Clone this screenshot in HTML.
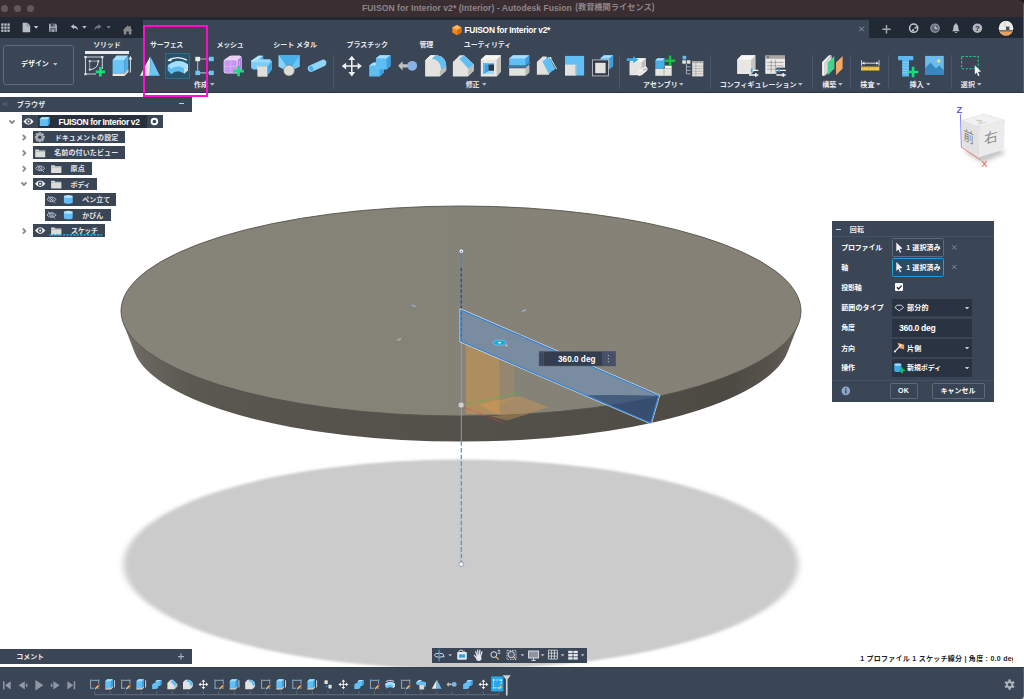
<!DOCTYPE html><html lang="ja"><head><meta charset="utf-8"><title>FUISON for Interior v2</title><style>
*{box-sizing:border-box;margin:0;padding:0}
html,body{width:1024px;height:699px;overflow:hidden;background:#fff}
body{position:relative;font-family:"Liberation Sans","Noto Sans CJK JP",sans-serif;color:#fff;font-size:9px;line-height:1}
.abs{position:absolute}
.t{position:absolute;white-space:pre;font-weight:700}
.sep{position:absolute;top:55px;width:1px;height:34px;background:#4b5668}
.row{position:absolute;height:12px;background:#3a4556}
.fld{position:absolute;background:#2a3341}
</style></head><body>
<svg class="abs" style="left:0;top:92px" width="1024" height="575" viewBox="0 92 1024 575">
<defs>
<filter id="bl" x="-5%" y="-10%" width="110%" height="120%"><feGaussianBlur stdDeviation="3 1.1"/></filter>
<linearGradient id="gtop" x1="0" y1="0" x2="1" y2="0"><stop offset="0" stop-color="#868378"/><stop offset="0.5" stop-color="#858278"/><stop offset="1" stop-color="#858177"/></linearGradient>
<linearGradient id="gside" x1="0" y1="0" x2="1" y2="0"><stop offset="0" stop-color="#75726a"/><stop offset="0.03" stop-color="#696660"/><stop offset="0.1" stop-color="#5b5851"/><stop offset="0.3" stop-color="#56534c"/><stop offset="0.6" stop-color="#534f49"/><stop offset="0.9" stop-color="#4d4a44"/><stop offset="0.96" stop-color="#57534c"/><stop offset="1" stop-color="#68655d"/></linearGradient>
<clipPath id="ctop"><ellipse cx="461" cy="311" rx="340" ry="105"/></clipPath>
</defs>
<!-- ground shadow -->
<ellipse cx="461" cy="564.2" rx="337.5" ry="104.8" fill="#cbcbcb" filter="url(#bl)"/>
<!-- disc -->
<path d="M123.4 323.4 L134.4 352 A328.9 101.6 0 0 0 787.6 352 L798.6 323.4 Z" fill="url(#gside)"/>
<ellipse cx="461" cy="311" rx="340" ry="105" fill="url(#gtop)" stroke="#56534c" stroke-width="0.9"/>
<!-- ghosted body (orange) -->
<g clip-path="url(#ctop)">
<path d="M465.7 343 L499.4 358 L499.4 414 L465.7 414 Z" fill="#e8a040" fill-opacity="0.42"/>
<path d="M499.4 358 L514.4 364.5 L514.4 398 L499.4 405 Z" fill="#e8a040" fill-opacity="0.17"/>
<path d="M478.6 404.4 L518.7 395.8 L548.7 407.3 L507.2 419.4 Z" fill="#e8a040" fill-opacity="0.32"/>
</g>
<path d="M490 416.2 L530 413.5 L507.2 420.4 Z" fill="#a98a55" fill-opacity="0.55"/>
<!-- origin axes -->
<path d="M465 404.4 L520.8 392.2" stroke="#3fc24a" stroke-width="1" stroke-dasharray="9 2 2 2" fill="none" opacity="0.65"/>
<path d="M464.3 407.3 L503.6 423" stroke="#d9424f" stroke-width="1" stroke-dasharray="9 2 2 2" fill="none" opacity="0.6"/>
<!-- revolve axis -->
<path d="M461.3 252 V341" stroke="#3f86dc" stroke-width="1.3" fill="none"/>
<path d="M461.3 268 V310" stroke="#3a4a63" stroke-width="1.3" stroke-dasharray="3.2 2.2" fill="none"/>
<path d="M461.3 341.5 V441" stroke="#8fa6c6" stroke-width="1" fill="none" opacity="0.85"/>
<path d="M461.3 441.5 V562" stroke="#4a90e2" stroke-width="1.2" stroke-dasharray="4.6 2" fill="none"/>
<!-- profile -->
<path d="M460.9 310 L658.6 395.8 L650.7 422.9 L460.9 341.3 Z" fill="#6a9ad8" fill-opacity="0.42"/>
<path d="M612 395 Q640 395 658.6 395.8 L650.7 422.9 L586 395.3 Z" fill="#1c3561" fill-opacity="0.55"/>
<path d="M460.0 308.6 L659.7 395.3 L651.3 424.1 L460.0 341.9 Z" fill="none" stroke="#eef0ee" stroke-width="0.9" stroke-opacity="0.85" stroke-linejoin="round"/>
<path d="M460.9 310 L658.6 395.8 L650.7 422.9 L460.9 341.3 Z" fill="none" stroke="#2f86e6" stroke-width="1.1" stroke-linejoin="round"/>
<path d="M461.3 312 V340" stroke="#3a4a63" stroke-width="1" stroke-dasharray="3.2 2.2" fill="none" opacity="0.6"/>
<!-- sketch points / origin -->
<path d="M474 345 Q505 346.5 528.4 329.3" stroke="#6f8795" stroke-width="0.6" fill="none" opacity="0.8"/>
<ellipse cx="499.6" cy="342.6" rx="6.6" ry="2.7" fill="#1ea7e4" stroke="#7fd0f5" stroke-width="0.6"/>
<ellipse cx="499.6" cy="342.6" rx="1.5" ry="0.9" fill="#fff"/>
<circle cx="506.5" cy="345.6" r="1" fill="#c9d3da"/>
<path d="M412 305.2l3 1.2M397.5 340.2l3-1.2M522.5 311.2l3-1.2" stroke="#9fb3c2" stroke-width="1.4" stroke-linecap="round"/>
<!-- handles -->
<circle cx="461.3" cy="251.3" r="2.3" fill="#fff" stroke="#6c7785" stroke-width="0.8"/>
<circle cx="461.3" cy="251.6" r="0.9" fill="#3f86dc"/>
<circle cx="461.2" cy="405.1" r="3" fill="#d2d2d0" stroke="#8b8984" stroke-width="0.9"/>
<circle cx="461.2" cy="564.2" r="2.3" fill="#fff" stroke="#7d8794" stroke-width="0.8"/>
<!-- view cube -->
<defs><filter id="bl2" x="-30%" y="-30%" width="160%" height="160%"><feGaussianBlur stdDeviation="2.2"/></filter></defs>
<path d="M964 151L982 163L1006 153L988 143Z" fill="#b8b8b8" filter="url(#bl2)" opacity="0.8"/>
<path d="M961.7 120.3L984 114L1004.7 120.3L978.3 127.2Z" fill="#f1f1f1"/>
<path d="M961.7 120.3L978.3 127.2V157.5L962.3 147.8Z" fill="#e2e2e2"/>
<path d="M978.3 127.2L1004.7 120.3L1004.1 149.5L978.3 157.5Z" fill="#ebebeb"/>
<path d="M961.7 120.3L984 114L1004.7 120.3L978.3 127.2ZM978.3 127.2V157.5" fill="none" stroke="#d2d2d2" stroke-width="0.6" stroke-dasharray="1.5 1"/>
<rect x="975.6" y="125.2" width="5" height="5" fill="#dfe3ea" opacity="0.8"/>
<text transform="matrix(0.94 0.42 0 1.28 963.6 139.4)" font-family="'Liberation Sans','Noto Sans CJK JP',sans-serif" font-size="11" fill="#828282">前</text>
<text transform="matrix(1 -0.28 0 1 984.2 144.2)" font-family="'Liberation Sans','Noto Sans CJK JP',sans-serif" font-size="13.5" fill="#8a8a8a">右</text>
<text transform="matrix(1 -0.2 0.9 0.45 978 123.8)" font-family="'Liberation Sans','Noto Sans CJK JP',sans-serif" font-size="9" fill="#a9a9a9">上</text>
<path d="M960.4 114L961.4 147.2" stroke="#6a6af2" stroke-width="0.8"/><path d="M961.4 147.2L981.2 160.4" stroke="#ee6a6a" stroke-width="0.8"/>
<text x="956.6" y="112.6" font-family="'Liberation Sans',sans-serif" font-size="9.4" font-weight="700" fill="#5b5bf0">Z</text>
<text x="981.2" y="166.8" font-family="'Liberation Sans',sans-serif" font-size="9.4" fill="#f05252">X</text>
<!-- dimension box -->
<rect x="538.8" y="351.2" width="77" height="15" fill="#465167"/>
<rect x="544" y="352" width="58" height="13.4" fill="#333d4d"/>
<path d="M540.6 353v11.5M542.4 353v11.5" stroke="#364052" stroke-width="0.9"/>
<circle cx="608.4" cy="355.6" r="0.7" fill="#aab2bf"/><circle cx="608.4" cy="358.7" r="0.7" fill="#aab2bf"/><circle cx="608.4" cy="361.8" r="0.7" fill="#aab2bf"/>
<text x="558" y="362" font-family="'Liberation Sans',sans-serif" font-size="8.6" font-weight="700" fill="#fff" textLength="37.5" lengthAdjust="spacingAndGlyphs">360.0 deg</text>
</svg>

<div class="abs" style="left:0;top:0;width:1024px;height:17.3px;background:#3a2e32"></div>
<div class="abs" style="left:1.0px;top:4.7px;width:7.4px;height:7.4px;border-radius:50%;background:#63585d"></div>
<div class="abs" style="left:13.9px;top:4.7px;width:7.4px;height:7.4px;border-radius:50%;background:#63585d"></div>
<div class="abs" style="left:26.8px;top:4.7px;width:7.4px;height:7.4px;border-radius:50%;background:#63585d"></div>
<div class="abs" style="left:0;top:16.6px;width:1024px;height:0.8px;background:#2b2125"></div>
<div class="t" style="left:362.00px;top:1.98px;font-size:8.6px;line-height:12.04px;letter-spacing:0.029px;color:#8d8589;font-weight:700;">FUISON for Interior v2* (Interior) - Autodesk Fusion</div>
<div class="t" style="left:575.15px;top:2.26px;font-size:8.2px;line-height:11.48px;letter-spacing:0.040px;color:#8d8589;font-weight:700;">(教育機関ライセンス)</div>
<div class="abs" style="left:0;top:17.3px;width:1024px;height:20.4px;background:#212935"></div>
<div class="abs" style="left:143px;top:19.8px;width:726px;height:17.9px;background:#3a4556"></div>
<div class="t" style="left:464.50px;top:24.52px;font-size:8.4px;line-height:11.76px;letter-spacing:-0.243px;color:#fff;font-weight:700;">FUISON for Interior v2*</div>
<svg class="abs" style="left:0;top:17px" width="1024" height="21" viewBox="0 17 1024 21">
<!-- app grid -->
<g fill="#b9bdc5"><rect x="1.2" y="23.4" width="2.3" height="2.3"/><rect x="4.3" y="23.4" width="2.3" height="2.3"/><rect x="7.4" y="23.4" width="2.3" height="2.3"/>
<rect x="1.2" y="26.5" width="2.3" height="2.3"/><rect x="4.3" y="26.5" width="2.3" height="2.3"/><rect x="7.4" y="26.5" width="2.3" height="2.3"/>
<rect x="1.2" y="29.6" width="2.3" height="2.3"/><rect x="4.3" y="29.6" width="2.3" height="2.3"/><rect x="7.4" y="29.6" width="2.3" height="2.3"/></g>
<!-- file -->
<path d="M22.6 22.8H27.4L30.2 25.6V32.2H22.6Z" fill="#b9bdc5"/><path d="M27.2 22.8V25.8H30.2" fill="none" stroke="#6d7480" stroke-width="0.7"/>
<path d="M33.9 26H38.3L36.1 28.8Z" fill="#c6cad1"/>
<!-- save -->
<path d="M49 23.7H55.6L57 25.1V31.8H49Z" fill="#9fa6b2"/><rect x="50.8" y="23.7" width="4.2" height="2.7" fill="#3b4352"/><rect x="53.4" y="24.1" width="1" height="1.9" fill="#9fa6b2"/><rect x="50.6" y="28.3" width="4.8" height="3.5" fill="#3b4352"/><rect x="51.6" y="29.2" width="2.8" height="2.6" fill="#9fa6b2"/>
<!-- undo -->
<path d="M70.7 26.6L74 24.2V25.8Q77.6 25.9 78 30.2Q76.6 27.8 74 27.7V29.2Z" fill="#b9bdc5"/>
<path d="M82.2 26H86.6L84.4 28.8Z" fill="#b9bdc5"/>
<!-- redo (dim) -->
<path d="M101.5 26.6L98.2 24.2V25.8Q94.6 25.9 94.2 30.2Q95.6 27.8 98.2 27.7V29.2Z" fill="#6f7885"/>
<path d="M106.4 26H110.8L108.6 28.8Z" fill="#6f7885"/>
<!-- home -->
<path d="M122.6 30.4L127.6 25.6L129.4 27.3V26H130.8V28.6L132.6 30.4H131.4V34.6H128.8V31.6H126.4V34.6H123.8V30.4Z" fill="#8a8b88"/>
<!-- document cube -->
<path d="M452.3 27.6L456.9 25L461.5 27.6V32.6L456.9 35.2L452.3 32.6Z" fill="#f08a1e"/><path d="M452.3 27.6L456.9 25L461.5 27.6L456.9 30.2Z" fill="#ffb35a"/><path d="M456.9 30.2L461.5 27.6V32.6L456.9 35.2Z" fill="#d96f0c"/>
<!-- close tab -->
<path d="M859.3 26.6L863.9 31.2M863.9 26.6L859.3 31.2" stroke="#9aa3b0" stroke-width="0.9"/>
<!-- new tab -->
<path d="M886.5 25V33.4M882.3 29.2H890.7" stroke="#a2a6ad" stroke-width="1.5"/>
<!-- extensions -->
<circle cx="913.7" cy="28.2" r="4.1" fill="#212935" stroke="#c3c7ce" stroke-width="1.5"/><path d="M913.9 28.4L916.6 25.4L916.9 28.6ZM913.4 28.6L911 30.9L914.4 31.4Z" fill="#c3c7ce"/>
<!-- job status -->
<circle cx="935" cy="28.2" r="4.8" fill="#8d939e"/><circle cx="935" cy="28.2" r="3.4" fill="#5d6470"/><path d="M935 25.6V28.4H937.4" stroke="#d4d7dc" stroke-width="1" fill="none"/>
<!-- bell -->
<path d="M952.1 31.2Q953.5 30 953.5 27.6Q953.6 24.3 955.9 24.1Q958.2 24.3 958.3 27.6Q958.3 30 959.7 31.2Z" fill="#b9bdc6"/><path d="M955.9 23.2V24.6" stroke="#b9bdc6" stroke-width="1.1"/><path d="M954.7 32H957.1Q957 33.1 955.9 33.1Q954.8 33.1 954.7 32Z" fill="#b9bdc6"/>
<!-- help -->
<circle cx="977.4" cy="28.2" r="4.8" fill="#b0b5be"/>
<text x="977.4" y="30.9" font-family="'Liberation Sans',sans-serif" font-size="7.6" font-weight="700" fill="#212935" text-anchor="middle">?</text>
<!-- avatar -->
<clipPath id="av"><circle cx="1006" cy="28.2" r="7.4"/></clipPath>
<circle cx="1006" cy="28.2" r="8.2" fill="#10151d"/>
<g clip-path="url(#av)"><rect x="997" y="20" width="18" height="17" fill="#ecebe6"/><rect x="997" y="31.4" width="18" height="6" fill="#eaa05a"/><rect x="1006" y="26.6" width="3.4" height="3.4" fill="#4a4f50"/><rect x="997" y="30.2" width="18" height="1.3" fill="#5a5048"/><path d="M1005 21V27" stroke="#b9b9b4" stroke-width="0.6"/></g>
</svg>

<div class="abs" style="left:0;top:37.5px;width:1024px;height:55px;background:#3a4556"></div>
<div class="abs" style="left:0;top:91.6px;width:1024px;height:1px;background:#2c3647"></div>
<div class="abs" style="left:3px;top:45.3px;width:71px;height:39.5px;border:1.2px solid #5d697c;border-radius:3px"></div>
<div class="t" style="left:20.95px;top:59.00px;font-size:7.0px;line-height:9.8px;letter-spacing:-0.029px;color:#fff;font-weight:700;">デザイン</div>
<svg class="abs" style="left:52.70px;top:63.10px" width="4.6" height="2.8" viewBox="0 0 4.6 2.8"><path d="M0 0H4.6L2.3 2.8Z" fill="#b4bbc6"/></svg>
<div class="t" style="left:93.15px;top:40.00px;font-size:7.0px;line-height:9.8px;letter-spacing:-0.171px;color:#e8eaee;font-weight:700;">ソリッド</div>
<div class="t" style="left:149.95px;top:40.00px;font-size:7.0px;line-height:9.8px;letter-spacing:-0.287px;color:#e8eaee;font-weight:700;">サーフェス</div>
<div class="t" style="left:216.55px;top:40.00px;font-size:7.0px;line-height:9.8px;letter-spacing:-0.229px;color:#e8eaee;font-weight:700;">メッシュ</div>
<div class="t" style="left:273.25px;top:40.00px;font-size:7.0px;line-height:9.8px;letter-spacing:-0.031px;color:#e8eaee;font-weight:700;">シート メタル</div>
<div class="t" style="left:346.50px;top:40.00px;font-size:7.0px;line-height:9.8px;letter-spacing:-0.068px;color:#e8eaee;font-weight:700;">プラスチック</div>
<div class="t" style="left:419.50px;top:40.00px;font-size:7.0px;line-height:9.8px;letter-spacing:-0.167px;color:#e8eaee;font-weight:700;">管理</div>
<div class="t" style="left:463.75px;top:40.00px;font-size:7.0px;line-height:9.8px;letter-spacing:-0.103px;color:#e8eaee;font-weight:700;">ユーティリティ</div>
<div class="abs" style="left:85px;top:51.4px;width:43.5px;height:2.2px;background:#e8eaee"></div>
<div class="sep" style="left:333px"></div>
<div class="sep" style="left:619px"></div>
<div class="sep" style="left:710px"></div>
<div class="sep" style="left:812px"></div>
<div class="sep" style="left:850px"></div>
<div class="sep" style="left:888px"></div>
<div class="sep" style="left:951px"></div>
<div class="t" style="left:194.05px;top:79.90px;font-size:7.0px;line-height:9.8px;letter-spacing:0.000px;color:#e8eaee;font-weight:700;">作成</div>
<svg class="abs" style="left:210.10px;top:83.40px" width="4.6" height="2.8" viewBox="0 0 4.6 2.8"><path d="M0 0H4.6L2.3 2.8Z" fill="#b4bbc6"/></svg>
<div class="t" style="left:465.75px;top:79.90px;font-size:7.0px;line-height:9.8px;letter-spacing:-0.167px;color:#e8eaee;font-weight:700;">修正</div>
<svg class="abs" style="left:481.70px;top:83.40px" width="4.6" height="2.8" viewBox="0 0 4.6 2.8"><path d="M0 0H4.6L2.3 2.8Z" fill="#b4bbc6"/></svg>
<div class="t" style="left:643.00px;top:79.90px;font-size:7.0px;line-height:9.8px;letter-spacing:0.021px;color:#e8eaee;font-weight:700;">アセンブリ</div>
<svg class="abs" style="left:678.95px;top:83.40px" width="4.6" height="2.8" viewBox="0 0 4.6 2.8"><path d="M0 0H4.6L2.3 2.8Z" fill="#b4bbc6"/></svg>
<div class="t" style="left:719.75px;top:79.90px;font-size:7.0px;line-height:9.8px;letter-spacing:0.036px;color:#e8eaee;font-weight:700;">コンフィギュレーション</div>
<svg class="abs" style="left:798.20px;top:83.40px" width="4.6" height="2.8" viewBox="0 0 4.6 2.8"><path d="M0 0H4.6L2.3 2.8Z" fill="#b4bbc6"/></svg>
<div class="t" style="left:822.25px;top:79.90px;font-size:7.0px;line-height:9.8px;letter-spacing:0.000px;color:#e8eaee;font-weight:700;">構築</div>
<svg class="abs" style="left:838.20px;top:83.40px" width="4.6" height="2.8" viewBox="0 0 4.6 2.8"><path d="M0 0H4.6L2.3 2.8Z" fill="#b4bbc6"/></svg>
<div class="t" style="left:860.25px;top:79.90px;font-size:7.0px;line-height:9.8px;letter-spacing:0.167px;color:#e8eaee;font-weight:700;">検査</div>
<svg class="abs" style="left:876.45px;top:83.40px" width="4.6" height="2.8" viewBox="0 0 4.6 2.8"><path d="M0 0H4.6L2.3 2.8Z" fill="#b4bbc6"/></svg>
<div class="t" style="left:909.50px;top:79.90px;font-size:7.0px;line-height:9.8px;letter-spacing:0.167px;color:#e8eaee;font-weight:700;">挿入</div>
<svg class="abs" style="left:925.70px;top:83.40px" width="4.6" height="2.8" viewBox="0 0 4.6 2.8"><path d="M0 0H4.6L2.3 2.8Z" fill="#b4bbc6"/></svg>
<div class="t" style="left:960.75px;top:79.90px;font-size:7.0px;line-height:9.8px;letter-spacing:0.167px;color:#e8eaee;font-weight:700;">選択</div>
<svg class="abs" style="left:976.95px;top:83.40px" width="4.6" height="2.8" viewBox="0 0 4.6 2.8"><path d="M0 0H4.6L2.3 2.8Z" fill="#b4bbc6"/></svg>
<div class="abs" style="left:165.3px;top:53.1px;width:25.2px;height:25.6px;background:#27526c;border:1px solid #2f6a89"></div>
<svg class="abs" style="left:0;top:37px" width="1024" height="56" viewBox="0 37 1024 56">
<!-- create sketch -->
<g fill="none" stroke="#c9ced6" stroke-width="1.1"><path d="M85.5 57V74H96M85.5 57H102.3V69"/></g>
<g fill="#e6e8ec"><rect x="84.4" y="56" width="2.2" height="2.2"/><rect x="101.2" y="56" width="2.2" height="2.2"/><rect x="84.4" y="73" width="2.2" height="2.2"/>
<rect x="88.8" y="60.2" width="1.9" height="1.9"/><rect x="97.3" y="60.2" width="1.9" height="1.9"/><rect x="88.8" y="68.7" width="1.9" height="1.9"/></g>
<path d="M89.7 62V69.6M91 61.1H97" stroke="#aab0ba" stroke-width="0.9" fill="none"/>
<path d="M98.2 62Q97.6 69 89.9 69.6" stroke="#dfe2e7" stroke-width="1" fill="none"/>
<path d="M100.4 67.1v9.4M95.7 71.8h9.4" stroke="#12e07a" stroke-width="2.7"/>
<!-- extrude -->
<path d="M112.6 60L116.6 55.6H128.3L124.5 60Z" fill="#a6e0ff"/>
<path d="M124.5 60L128.3 55.6V69.4L124.5 73.4Z" fill="#4fb2ec"/>
<rect x="112.6" y="60" width="11.9" height="13.4" fill="#6cc5f7"/>
<path d="M112.6 73.4H124.5L128.3 69.4V72L124.5 76H112.6Z" fill="#ebe7e1"/>
<path d="M124.5 73.4L128.3 69.4V72L124.5 76Z" fill="#cfcbc5"/>
<path d="M130.4 58.5V72.6" stroke="#f0f0f0" stroke-width="0.9"/><path d="M130.4 55.8l1.7 3.6h-3.4z" fill="#f0f0f0"/>
<!-- surface (triangle) -->
<path d="M150.2 56.4L149.7 75.8H139.9Z" fill="#e9e8e5"/><path d="M147 62.5L146.6 75.8H144.6Z" fill="#cfcdc8"/>
<path d="M150.3 56.4L159.9 75.8H150Z" fill="#6cc5f7"/>
<!-- revolve (selected) -->
<path d="M168 60.6Q177.5 54.8 187 60.2" stroke="#f4f4f4" stroke-width="1.4" fill="none"/><path d="M167.6 60.9l3.4-3.1l0.6 3.4z" fill="#f4f4f4"/>
<path d="M167.7 65.5Q177.8 57 187.9 64.2V66.5L184.4 73.8Q177.5 68.6 171.3 74.2L167.7 70.6Z" fill="#5fbdf3"/>
<path d="M167.7 65.5Q177.8 57 187.9 64.2L184.4 68.4Q177.6 63.8 171.3 69Z" fill="#a5dfff"/>
<path d="M184.4 68.4L187.9 64.2V70.2L184.4 73.8Z" fill="#efece6"/><path d="M185.6 67.6L186.8 66.2V71.1L185.6 72.4Z" fill="#c9c6c0"/>
<!-- pattern -->
<path d="M197.7 59V73M197.7 59H211.3M197.7 72.9H211.3" stroke="#aeb4be" stroke-width="1.1" fill="none"/>
<rect x="195.3" y="56.8" width="4.8" height="4.4" fill="#edebe8"/>
<rect x="209" y="56.8" width="4.8" height="4.4" fill="#6cc5f7"/><rect x="195.3" y="70.7" width="4.8" height="4.4" fill="#6cc5f7"/><rect x="209" y="70.7" width="4.8" height="4.4" fill="#6cc5f7"/>
<!-- mesh (purple) -->
<path d="M223.6 61.5Q223.6 59.8 225.2 58.9L229.5 56Q230.6 55.4 232 55.4H239Q241.7 55.4 241.7 58V68.5Q241.7 69.7 240.8 70.5L238 73Q237.2 73.6 236 73.6H226Q223.6 73.6 223.6 71.2Z" fill="#ecd5fc"/>
<rect x="224.4" y="60.2" width="12.4" height="12.6" rx="1.6" fill="#c898f0"/>
<path d="M237.7 60L241 57.2V68.4L237.7 71.6Z" fill="#b07ce0"/>
<path d="M226.2 59.2L230.2 56.2H240L236.8 59.2Z" fill="#ead2fb"/>
<path d="M230.6 60.2V72.8M224.4 66.5H236.8M233.2 56.2L231.4 59.2M239.4 60.6V69.6" stroke="#dcbaf8" stroke-width="0.7" fill="none"/>
<path d="M238.6 65.9v10.4M233.4 71.1h10.4" stroke="#12e07a" stroke-width="2.7"/>
<!-- sheet metal -->
<path d="M251.1 60.8L258.4 55.8H263.1V59.6H270.4L271.9 61.4V69.6L268.1 74.3V66.1H258.4V69.6H253.1L251.1 67.8Z" fill="#7ccdf9"/>
<path d="M251.1 60.8L258.4 55.8H263.1L259 59.6L252.6 62.3Z" fill="#b5e4ff"/>
<path d="M259 59.6L263.1 55.8V59.6Z" fill="#4fb2ec"/>
<path d="M268.1 65.8L271.9 61.4V69.6L268.1 74.6Z" fill="#3fa4e6"/>
<path d="M252.6 62.3L259 59.6H270.4L268.1 62.3Z" fill="#9bdafc"/>
<rect x="257.8" y="66.4" width="9.4" height="9.9" fill="#e0ded9" stroke="#f1f0ed" stroke-width="0.5"/>
<!-- funnel -->
<path d="M278.7 55.3H299.8V66.5L294.5 69.3H283.5L278.7 66.5Z" fill="#6cc5f7"/>
<path d="M278.7 55.3L285.8 65.5H292.6L299.8 55.3Z" fill="#4aaee9"/><path d="M278.7 55.3L285.8 65.5L283.5 69.3L278.7 66.5Z" fill="#8bd3fb"/>
<circle cx="289" cy="70.5" r="5.4" fill="#dedcd7" stroke="#6f6d69" stroke-width="0.6"/>
<!-- pipe -->
<path d="M309.6 65.5L322.8 59.6A3 3.6 0 0 1 325.6 65.6L312.6 71.6A3.4 3.4 0 0 1 309.6 65.5Z" fill="#8fd4fb"/>
<ellipse cx="311.2" cy="68.5" rx="2.1" ry="2.6" transform="rotate(-24 311.2 68.5)" fill="#4aaee9"/>
<!-- move -->
<g fill="#f2f2f2"><path d="M351.8 55.8l3.4 4.3h-6.8z"/><path d="M351.8 76.4l3.4-4.3h-6.8z"/><path d="M341.8 66.1l4.3-3.4v6.8z"/><path d="M361.9 66.1l-4.3-3.4v6.8z"/></g>
<path d="M351.8 59.5V72.8M345.5 66.1H358.2" stroke="#f2f2f2" stroke-width="1.5"/>
<!-- combine -->
<path d="M375.9 58.2L379.8 55.3H390.5V66L386.6 69.6H384V72.6L379.6 76.4H369.2V65.5L373.3 62.4H375.9Z" fill="#5fbdf3"/>
<path d="M375.9 58.2L379.8 55.3H390.5L386.6 58.4Z" fill="#a5dfff"/><path d="M369.2 65.5L373.3 62.4H375.9V65.5Z" fill="#a5dfff"/>
<path d="M386.6 58.4L390.5 55.3V66L386.6 69.6Z" fill="#3d9fe0"/><path d="M379.6 69.6H384V72.6L379.6 76.4Z" fill="#3d9fe0"/>
<!-- align -->
<path d="M398.1 65.8L402.6 61.2V64.2H408.5V67.4H402.6V70.4Z" fill="#bfc0c0"/>
<circle cx="412.2" cy="65.8" r="4.9" fill="#86b3e3"/>
<!-- fillet -->
<path d="M425.1 60.5L430.5 55.3H437Q446.2 57 446.2 66.5V70.5L439.8 76.4H425.1Z" fill="#e4e2de"/>
<path d="M431.5 58.6L435.5 55.3Q446.2 56 446.2 67L441.2 70Q441 60 431.5 58.6Z" fill="#62bff5"/>
<path d="M441.2 70L446.2 66.5V70.5L439.8 76.4V71Z" fill="#bdbab5"/><path d="M425.1 60.5L430.5 55.3H435.5L431.5 58.6Z" fill="#f4f3f0"/>
<!-- chamfer -->
<path d="M452.9 62L459.8 55.3H464L474 64.6V70.5L467.8 76.4H452.9Z" fill="#e4e2de"/>
<path d="M459.4 58.7L463.8 55.3L474 64.6L468.6 69Z" fill="#62bff5"/><path d="M468.6 69L474 64.6V70.5L467.8 76.4Z" fill="#bdbab5"/>
<!-- shell -->
<path d="M480.8 59.6L485.6 55.3H501V71.6L496.6 76.4H480.8Z" fill="#e9e7e3"/>
<path d="M496.6 59.6L501 55.3V71.6L496.6 76.4Z" fill="#c4c1bc"/><path d="M480.8 59.6L485.6 55.3H501L496.6 59.6Z" fill="#f6f5f3"/>
<rect x="483.2" y="63" width="10.8" height="11" fill="#2f3a49"/>
<path d="M483.2 63H488.6V70.8L483.2 74Z" fill="#3f9fe0"/><path d="M483.2 74L488.6 70.8H494V74Z" fill="#9ad9fd"/><path d="M483.2 63H494V64.6H484.8V74H483.2Z" fill="#62bff5"/>
<!-- split body -->
<path d="M509.2 58.5L513 55.3H529.2V62.2L525.4 65.4H509.2Z" fill="#62bff5"/><path d="M509.2 58.5L513 55.3H529.2L525.4 58.5Z" fill="#a5dfff"/><path d="M525.4 58.5L529.2 55.3V62.2L525.4 65.4Z" fill="#3d9fe0"/>
<path d="M508 66.9H525.6L530.4 62.6" stroke="#3aa3e6" stroke-width="1" fill="none"/>
<path d="M509.2 68.3H525.4L529.2 65V72.4L525.4 75.8H509.2Z" fill="#e4e2de"/><path d="M525.4 68.3L529.2 65V72.4L525.4 75.8Z" fill="#bdbab5"/>
<!-- draft -->
<path d="M536.9 62L542.6 56.6H546.4L551 71.6L548 75H536.9Z" fill="#e4e2de"/><path d="M536.9 73.8H549V75H536.9Z" fill="#bdbab5"/>
<path d="M542.4 61.4L548.8 56.6L555.4 69L548.6 73.6Z" fill="#62bff5"/>
<path d="M550.6 58.4L556.6 69" stroke="#f2f2f2" stroke-width="0.9"/><circle cx="550.4" cy="58" r="1.1" fill="#f2f2f2"/>
<!-- scale -->
<rect x="565" y="55.9" width="19.1" height="19.6" fill="#62bff5"/><rect x="565" y="64.6" width="11.2" height="10.9" fill="#e4e2de"/><path d="M575.2 64.6h1v10.9h-1z" fill="#bdbab5"/>
<!-- offset face -->
<path d="M600.4 58.2L604 55.3H613.1V66L609.4 69.2H600.4Z" fill="#62bff5"/><path d="M600.4 58.2L604 55.3H613.1L609.4 58.2Z" fill="#a5dfff"/><path d="M609.4 58.2L613.1 55.3V66L609.4 69.2Z" fill="#3d9fe0"/>
<rect x="592.5" y="59.9" width="16" height="16" fill="#303a49" stroke="#b9bcc2" stroke-width="0.9"/>
<rect x="595.2" y="62.8" width="10.4" height="10.4" fill="#e4e2de"/>
<!-- insert derive -->
<path d="M629.5 62L633.8 58.2H645.9V71.4L641.6 75.2H629.5Z" fill="#e6e4e0"/><path d="M641.6 62L645.9 58.2V71.4L641.6 75.2Z" fill="#c4c1bc"/><path d="M629.5 62L633.8 58.2H645.9L641.6 62Z" fill="#f6f5f3"/>
<path d="M626.8 58.3H633.2V56.2L638.4 59.7L633.2 63.2V61.1H626.8Z" fill="#37aee9"/>
<g fill="none" stroke="#f4f4f4" stroke-width="1.3"><rect x="637.6" y="71" width="5.6" height="3.4" rx="1.7" transform="rotate(-35 640.4 72.7)"/><rect x="641.6" y="68" width="5.6" height="3.4" rx="1.7" transform="rotate(-35 644.4 69.7)"/></g>
<!-- new component -->
<path d="M655.3 68.6H671.7V75.8H655.3Z" fill="#e6e4e0"/><path d="M664.8 65.6H671.7V68.6H664.8Z" fill="#f4f3f0"/><path d="M663.4 68.6h1.2v7.2h-1.2z" fill="#bdbab5"/>
<path d="M655.3 60.6L657.4 58.2H664.6V66.2L662.6 68.7H655.3Z" fill="#49aee8"/><path d="M655.3 60.6L657.4 58.2H664.6L662.6 60.6Z" fill="#a5dfff"/>
<path d="M670.1 55.6v10.4M664.9 60.8h10.4" stroke="#16c23f" stroke-width="2.4"/>
<!-- BOM table -->
<rect x="682.6" y="55.8" width="3.6" height="3.6" fill="#62bff5"/><rect x="682.3" y="60.3" width="3.6" height="3.4" fill="#e6e4e0"/><rect x="686.8" y="60.3" width="3.6" height="3.4" fill="#e6e4e0"/>
<path d="M686.4 64V74M686.4 66.8H690.6M686.4 70.4H690.6M686.4 73.8H690.6" stroke="#aeb4be" stroke-width="0.9" fill="none"/>
<rect x="692.2" y="61.1" width="11.1" height="15.3" fill="#e6e4e0"/><rect x="692.2" y="61.1" width="11.1" height="2" fill="#a9a7a3"/>
<path d="M692.2 66H703.3M692.2 68.6H703.3M692.2 71.2H703.3M692.2 73.8H703.3M695.8 63V76.4" stroke="#9c9a96" stroke-width="0.6"/>
<!-- configure cube -->
<path d="M737.1 59.8L741.4 55.3H755.3V69.5L751 74H737.1Z" fill="#e9e7e4"/><path d="M751 59.8L755.3 55.3V69.5L751 74Z" fill="#c9c6c1"/><path d="M737.1 59.8L741.4 55.3H755.3L751 59.8Z" fill="#f8f7f5"/>
<path d="M749 70.4H758.4M749 75H758.4" stroke="#f2f2f2" stroke-width="1.3"/><rect x="750.8" y="68.6" width="1.7" height="3.6" fill="#2fa9ea"/><rect x="755" y="73.2" width="1.7" height="3.6" fill="#f2f2f2"/>
<!-- configure table -->
<rect x="765.3" y="55.6" width="19.7" height="18.2" fill="#eceae7"/><rect x="765.3" y="55.6" width="19.7" height="3.2" fill="#a9a7a3"/><rect x="766.6" y="56.6" width="2.6" height="1" fill="#4a4a4a"/>
<path d="M767 62.4H783.4M767 65.8H783.4M767 69.2H783.4M771.2 60V72.6M775.4 60V72.6" stroke="#8f8d89" stroke-width="0.7"/>
<rect x="776.4" y="67.6" width="9" height="9" fill="#3a4556"/>
<path d="M776.4 70.4H785.8M776.4 75H785.8" stroke="#f2f2f2" stroke-width="1.3"/><rect x="778.2" y="68.6" width="1.7" height="3.6" fill="#2fa9ea"/><rect x="782.4" y="73.2" width="1.7" height="3.6" fill="#f2f2f2"/>
<!-- construct -->
<path d="M822.1 62L829 55.3H831.6L824.8 62.4V75.8H822.1Z" fill="#f4f3f1"/><path d="M824.8 62.4L831.6 55.6V69L824.8 75.8Z" fill="#dcdad6"/>
<path d="M827.6 62.6L834.4 56V68.6L827.6 75.4Z" fill="#45d08c"/>
<path d="M836 62.6L842.6 56V68.6L836 75.2Z" fill="#f5a763"/>
<!-- inspect -->
<path d="M861.6 60.2V65.8M879 60.2V65.8M862.6 63.2H878" stroke="#eeeeee" stroke-width="0.9" fill="none"/><path d="M861.9 63.2l2.6-1.5v3z" fill="#eee"/><path d="M878.7 63.2l-2.6-1.5v3z" fill="#eee"/>
<rect x="861.1" y="66.6" width="18.3" height="3.9" fill="#f2c64a"/><path d="M863.5 66.6v1.8M866 66.6v1.4M868.5 66.6v1.8M871 66.6v1.4M873.5 66.6v1.8M876 66.6v1.4" stroke="#a8842a" stroke-width="0.6"/>
<!-- insert bolt -->
<path d="M898 56.6Q898 55.9 899 55.9H912.4Q913.4 55.9 913.4 56.8V59.4Q913.4 60.2 912.4 60.2H909V76.4H902.2V60.2H899Q898 60.2 898 59.4Z" fill="#5db8ef"/>
<path d="M902.2 62.4H909M902.2 65H909M902.2 67.6H909M902.2 70.2H909M902.2 72.8H909" stroke="#8fd4fb" stroke-width="0.8"/>
<path d="M913.1 66.8v10.4M907.9 72h10.4" stroke="#12e07a" stroke-width="2.7"/>
<!-- insert image -->
<rect x="925.1" y="55.9" width="18.7" height="19" fill="#6dbbea"/>
<path d="M925.1 74.9V68L930.6 62.6L936 68.6L939.4 65.6L943.8 70.4V74.9Z" fill="#3788c2"/><circle cx="938.6" cy="61" r="1.7" fill="#f5dc7a"/>
<!-- select -->
<rect x="961.6" y="56.5" width="16.6" height="12.2" fill="none" stroke="#19c98a" stroke-width="1.1" stroke-dasharray="2.4 1.5"/>
<path d="M974.8 65.2L981 71.6L978 71.9L979.6 75.6L978.2 76.3L976.6 72.6L974.8 74.6Z" fill="#f4f4f4"/>
</svg>

<div class="abs" style="left:142.9px;top:24.5px;width:65.1px;height:72.3px;border:2.4px solid #ff0ccc;border-bottom-width:2.8px"></div>
<div class="abs" style="left:0;top:97px;width:192px;height:14.5px;background:#3a4556"></div>
<div class="t" style="left:16.75px;top:99.70px;font-size:7.0px;line-height:9.8px;letter-spacing:0.143px;color:#e8eaee;font-weight:700;">ブラウザ</div>
<div class="abs" style="left:178.5px;top:103px;width:5px;height:1.2px;background:#c8cdd6"></div>
<div class="row" style="left:21.6px;top:115.2px;width:141.9px;height:12.5px"></div>
<div class="abs" style="left:37.8px;top:115.2px;width:109.1px;height:12.5px;background:#28303d"></div>
<div class="t" style="left:58.50px;top:116.85px;font-size:8.5px;line-height:11.9px;letter-spacing:-0.373px;color:#fff;font-weight:700;">FUISON for Interior v2</div>
<div class="row" style="left:33.2px;top:130.8px;width:91.6px;height:12.5px"></div>
<div class="t" style="left:54.75px;top:132.70px;font-size:7.0px;line-height:9.8px;letter-spacing:0.059px;color:#e4e7ec;font-weight:700;">ドキュメントの設定</div>
<div class="row" style="left:33.2px;top:146.4px;width:91.6px;height:12.5px"></div>
<div class="t" style="left:54.25px;top:148.30px;font-size:7.0px;line-height:9.8px;letter-spacing:0.118px;color:#e4e7ec;font-weight:700;">名前の付いたビュー</div>
<div class="row" style="left:33.2px;top:162.0px;width:58.4px;height:12.5px"></div>
<div class="t" style="left:70.50px;top:163.90px;font-size:7.0px;line-height:9.8px;letter-spacing:0.167px;color:#e4e7ec;font-weight:700;">原点</div>
<div class="row" style="left:33.2px;top:177.6px;width:63.6px;height:12.5px"></div>
<div class="t" style="left:70.50px;top:179.50px;font-size:7.0px;line-height:9.8px;letter-spacing:-0.306px;color:#e4e7ec;font-weight:700;">ボディ</div>
<div class="row" style="left:45.2px;top:193.2px;width:71px;height:12.5px"></div>
<div class="t" style="left:82.25px;top:195.10px;font-size:7.0px;line-height:9.8px;letter-spacing:0.000px;color:#e4e7ec;font-weight:700;">ペン立て</div>
<div class="row" style="left:45.2px;top:208.8px;width:65.7px;height:12.5px"></div>
<div class="t" style="left:82.25px;top:210.70px;font-size:7.0px;line-height:9.8px;letter-spacing:0.000px;color:#e4e7ec;font-weight:700;">かびん</div>
<div class="row" style="left:33.2px;top:224.4px;width:71.4px;height:12.5px"></div>
<div class="t" style="left:71.00px;top:226.30px;font-size:7.0px;line-height:9.8px;letter-spacing:-0.357px;color:#e4e7ec;font-weight:700;">スケッチ</div>
<svg class="abs" style="left:0;top:94px" width="200" height="146" viewBox="0 94 200 146">
<!-- collapse panel -->
<path d="M4.6 102.6L3.2 104.2L4.6 105.8M7 102.6L5.6 104.2L7 105.8" stroke="#6f7a8a" stroke-width="0.9" fill="none"/>
<!-- expanders -->
<g fill="none" stroke="#8b8b8b" stroke-width="1.8" stroke-linejoin="round">
<path d="M9.4 120.4L12 123L14.6 120.4"/><path d="M21.3 182.4L23.9 185L26.5 182.4"/>
<path d="M22.8 134.9L25.4 137.5L22.8 140.1"/><path d="M22.8 150.5L25.4 153.1L22.8 155.7"/><path d="M22.8 166.1L25.4 168.7L22.8 171.3"/><path d="M22.8 228.5L25.4 231.1L22.8 233.7"/>
</g>
<!-- eyes (visible) -->
<g><path d="M23.3 121.5Q28.5 114.9 33.7 121.5Q28.5 128.1 23.3 121.5Z" fill="#f0f1f3"/><circle cx="28.5" cy="121.5" r="2.3" fill="#3a4556"/><circle cx="28.5" cy="121.5" r="1.1" fill="#f0f1f3"/></g>
<g><path d="M35.0 183.8Q40.2 177.20000000000002 45.4 183.8Q40.2 190.4 35.0 183.8Z" fill="#f0f1f3"/><circle cx="40.2" cy="183.8" r="2.3" fill="#3a4556"/><circle cx="40.2" cy="183.8" r="1.1" fill="#f0f1f3"/></g>
<g><path d="M35.0 230.6Q40.2 224.0 45.4 230.6Q40.2 237.2 35.0 230.6Z" fill="#f0f1f3"/><circle cx="40.2" cy="230.6" r="2.3" fill="#3a4556"/><circle cx="40.2" cy="230.6" r="1.1" fill="#f0f1f3"/></g>
<!-- eyes (hidden) -->
<g fill="none" stroke="#aab2be" stroke-width="1">
<path d="M35.5 168.3Q40.2 163.4 44.9 168.3Q40.2 173.2 35.5 168.3Z"/><circle cx="40.2" cy="168.3" r="1.7"/><path d="M36.6 165L44 172"/>
<path d="M46.8 199.4Q51.5 194.5 56.2 199.4Q51.5 204.3 46.8 199.4Z"/><circle cx="51.5" cy="199.4" r="1.7"/><path d="M47.9 196.1L55.3 203.1"/>
<path d="M46.8 215Q51.5 210.1 56.2 215Q51.5 219.9 46.8 215Z"/><circle cx="51.5" cy="215" r="1.7"/><path d="M47.9 211.7L55.3 218.7"/>
</g>
<!-- root component cube -->
<path d="M39.8 119.2L41.6 117.2H49.5V123.8L47.8 125.9H39.8Z" fill="#62bff5"/><path d="M39.8 119.2L41.6 117.2H49.5L47.8 119.2Z" fill="#b5e4ff"/><path d="M47.8 119.2L49.5 117.2V123.8L47.8 125.9Z" fill="#3d9fe0"/>
<!-- active radio -->
<circle cx="154.4" cy="121.5" r="2.8" fill="none" stroke="#fff" stroke-width="1.9"/>
<!-- gear -->
<g transform="translate(39.8 137.2)" fill="#a9afb9"><circle r="3.6"/><g><rect x="-1.3" y="-5" width="2.6" height="10"/><rect x="-1.3" y="-5" width="2.6" height="10" transform="rotate(45)"/><rect x="-1.3" y="-5" width="2.6" height="10" transform="rotate(90)"/><rect x="-1.3" y="-5" width="2.6" height="10" transform="rotate(135)"/></g><circle r="1.7" fill="#3a4556"/></g>
<!-- folders -->
<g fill="#dcdcda"><path d="M35.2 149.6H38.6L39.4 150.6H45.2V157.3H35.2Z"/><path d="M51.1 165.2H54.5L55.3 166.2H61.4V172.9H51.1Z"/><path d="M51.1 180.8H54.5L55.3 181.8H61.4V188.5H51.1Z"/><path d="M51.1 227.6H54.5L55.3 228.6H61.4V235.3H51.1Z"/></g>
<g fill="#3a4556" opacity="0.35"><rect x="35.2" y="151.2" width="10" height="0.6"/><rect x="51.1" y="166.8" width="10.3" height="0.6"/><rect x="51.1" y="182.4" width="10.3" height="0.6"/><rect x="51.1" y="229.2" width="10.3" height="0.6"/></g>
<!-- bodies -->
<g><path d="M63.9 196.6V202.2A4.4 1.5 0 0 0 72.7 202.2V196.6Z" fill="#62bff5"/><ellipse cx="68.3" cy="196.6" rx="4.4" ry="1.5" fill="#b5e4ff"/></g>
<g><path d="M63.9 212.2V217.8A4.4 1.5 0 0 0 72.7 217.8V212.2Z" fill="#62bff5"/><ellipse cx="68.3" cy="212.2" rx="4.4" ry="1.5" fill="#b5e4ff"/></g>
<!-- sketch underline -->
<path d="M49.5 234.9H101.8" stroke="#1ea7e4" stroke-width="1.7" stroke-dasharray="2.2 1.2"/>
</svg>

<div class="abs" style="left:832px;top:221.2px;width:161.8px;height:181.1px;background:#3a4556"></div>
<div class="abs" style="left:832px;top:235.5px;width:161.8px;height:1px;background:#465164"></div>
<div class="abs" style="left:836.1px;top:228.6px;width:5px;height:1.3px;background:#c8cdd6"></div>
<div class="t" style="left:849.85px;top:225.30px;font-size:7.0px;line-height:9.8px;letter-spacing:0.200px;color:#e8eaee;font-weight:700;">回転</div>
<div class="t" style="left:841.15px;top:243.40px;font-size:7.0px;line-height:9.8px;letter-spacing:-0.182px;color:#fff;font-weight:700;">プロファイル</div>
<div class="t" style="left:841.15px;top:262.90px;font-size:7.0px;line-height:9.8px;letter-spacing:0.000px;color:#fff;font-weight:700;">軸</div>
<div class="t" style="left:841.15px;top:283.00px;font-size:7.0px;line-height:9.8px;letter-spacing:-0.240px;color:#fff;font-weight:700;">投影軸</div>
<div class="t" style="left:841.15px;top:303.30px;font-size:7.0px;line-height:9.8px;letter-spacing:0.127px;color:#fff;font-weight:700;">範囲のタイプ</div>
<div class="t" style="left:841.15px;top:323.40px;font-size:7.0px;line-height:9.8px;letter-spacing:-0.067px;color:#fff;font-weight:700;">角度</div>
<div class="t" style="left:841.15px;top:343.50px;font-size:7.0px;line-height:9.8px;letter-spacing:-0.067px;color:#fff;font-weight:700;">方向</div>
<div class="t" style="left:841.15px;top:363.30px;font-size:7.0px;line-height:9.8px;letter-spacing:-0.067px;color:#fff;font-weight:700;">操作</div>
<div class="abs" style="left:892px;top:238.4px;width:52.2px;height:18.3px;background:#364152;border:1px solid #5e6a7c;border-radius:1.5px"></div>
<div class="abs" style="left:892px;top:258.2px;width:52.4px;height:18.5px;background:#2b4a63;border:1.4px solid #1f9fd0;border-radius:1.5px"></div>
<div class="t" style="left:906.35px;top:243.20px;font-size:7.0px;line-height:9.8px;letter-spacing:0.083px;color:#fff;font-weight:700;">1 選択済み</div>
<div class="t" style="left:906.35px;top:263.00px;font-size:7.0px;line-height:9.8px;letter-spacing:0.083px;color:#fff;font-weight:700;">1 選択済み</div>
<div class="abs" style="left:895.1px;top:283.1px;width:8.2px;height:8.3px;background:#fff;border-radius:1px"></div>
<div class="fld" style="left:891.9px;top:298.7px;width:80.6px;height:17.8px"></div>
<div class="fld" style="left:891.9px;top:318.9px;width:80.6px;height:17.8px"></div>
<div class="fld" style="left:891.9px;top:338.9px;width:80.6px;height:17.8px"></div>
<div class="fld" style="left:891.9px;top:358.9px;width:80.6px;height:17.8px"></div>
<div class="t" style="left:907.05px;top:303.30px;font-size:7.0px;line-height:9.8px;letter-spacing:0.240px;color:#fff;font-weight:700;">部分的</div>
<div class="t" style="left:899.05px;top:322.28px;font-size:8.6px;line-height:12.04px;letter-spacing:-0.303px;color:#fff;font-weight:700;">360.0 deg</div>
<div class="t" style="left:907.05px;top:343.50px;font-size:7.0px;line-height:9.8px;letter-spacing:0.133px;color:#fff;font-weight:700;">片側</div>
<div class="t" style="left:907.05px;top:363.30px;font-size:7.0px;line-height:9.8px;letter-spacing:-0.092px;color:#fff;font-weight:700;">新規ボディ</div>
<svg class="abs" style="left:965.40px;top:306.50px" width="4.2" height="2.6" viewBox="0 0 4.2 2.6"><path d="M0 0H4.2L2.1 2.6Z" fill="#c8cdd6"/></svg>
<svg class="abs" style="left:965.40px;top:346.70px" width="4.2" height="2.6" viewBox="0 0 4.2 2.6"><path d="M0 0H4.2L2.1 2.6Z" fill="#c8cdd6"/></svg>
<svg class="abs" style="left:965.40px;top:366.50px" width="4.2" height="2.6" viewBox="0 0 4.2 2.6"><path d="M0 0H4.2L2.1 2.6Z" fill="#c8cdd6"/></svg>
<div class="abs" style="left:832px;top:379.8px;width:161.8px;height:1px;background:#465164"></div>
<div class="abs" style="left:889.5px;top:383.3px;width:28px;height:15.4px;background:#394455;border:1px solid #5e6a7c;border-radius:1.5px"></div>
<div class="abs" style="left:931.6px;top:383.3px;width:53px;height:15.4px;background:#394455;border:1px solid #5e6a7c;border-radius:1.5px"></div>
<div class="t" style="left:898.05px;top:386.30px;font-size:7.0px;line-height:9.8px;letter-spacing:0.267px;color:#fff;font-weight:700;">OK</div>
<div class="t" style="left:940.45px;top:386.30px;font-size:7.0px;line-height:9.8px;letter-spacing:0.022px;color:#fff;font-weight:700;">キャンセル</div>
<svg class="abs" style="left:832px;top:222px" width="162" height="181" viewBox="832 222 162 181">
<!-- cursor icons -->
<path d="M896.3 242.4L902.5 248.6L899.7 248.9L901.3 252.2L900 252.9L898.4 249.6L896.3 251.4Z" fill="#f0f0f0"/>
<path d="M896.3 261.9L902.5 268.1L899.7 268.4L901.3 271.7L900 272.4L898.4 269.1L896.3 270.9Z" fill="#f0f0f0"/>
<!-- clear x -->
<path d="M952.2 245.3L956.4 249.5M956.4 245.3L952.2 249.5M952.2 264.8L956.4 269M956.4 264.8L952.2 269" stroke="#8f98a6" stroke-width="0.8"/>
<!-- check -->
<path d="M896.9 287.3L898.6 289L901.6 285.6" stroke="#1d2430" stroke-width="1.3" fill="none"/>
<!-- extent type icon -->
<path d="M894.9 307.4L897.2 305.2H901.3L903.6 307.4L899.2 310.9Z" fill="none" stroke="#e6e8ec" stroke-width="0.9" stroke-linejoin="round"/>
<!-- direction icon -->
<path d="M897.6 342.7L904.2 344.8V349.6L899.6 348.2Z" fill="#f2a05c"/><path d="M894.8 351.6L900.6 345.4" stroke="#f4f4f4" stroke-width="1.1"/><circle cx="894.9" cy="351.5" r="1" fill="#f4f4f4"/><path d="M901.6 344.2l-0.4 2.6l-2.2-2z" fill="#f4f4f4"/>
<!-- new body icon -->
<path d="M894.2 364.6V370.8A3.6 1.3 0 0 0 901.4 370.8V364.6Z" fill="#3fa9ea"/><ellipse cx="897.8" cy="364.6" rx="3.6" ry="1.3" fill="#9ad9fd"/>
<path d="M902 367.6v5.6M899.2 370.4h5.6" stroke="#14c45a" stroke-width="1.7"/>
<!-- info -->
<circle cx="845.8" cy="390.9" r="4.3" fill="#8ea6c8"/><rect x="845.1" y="390.1" width="1.4" height="3.2" fill="#3a4556"/><rect x="845.1" y="388.1" width="1.4" height="1.4" fill="#3a4556"/>
</svg>

<div class="abs" style="left:0;top:648.5px;width:192px;height:15.2px;background:#3a4556"></div>
<div class="t" style="left:16.35px;top:652.10px;font-size:7.0px;line-height:9.8px;letter-spacing:-0.086px;color:#e8eaee;font-weight:700;">コメント</div>
<div class="abs" style="left:0;top:667px;width:1024px;height:32px;background:#3a4556;border-top:1px solid #323c4f"></div>
<div class="abs" style="left:432.2px;top:648.2px;width:154.5px;height:15px;background:#3a4556"></div>
<div class="abs" style="left:859px;top:650px;width:154.2px;height:17px;overflow:hidden">
<div class="t" style="left:1.15px;top:3.80px;font-size:7.0px;line-height:9.8px;letter-spacing:0.263px;color:#1e1e1e;font-weight:700;">1 プロファイル 1 スケッチ線分 | 角度 : 0.0 deg</div>
</div>
<svg class="abs" style="left:0;top:645px" width="1024" height="54" viewBox="0 645 1024 54">
<path d="M181 653.6V659.6M178 656.6H184" stroke="#aab1bd" stroke-width="1.1"/>
<g fill="#8f98a6">
<rect x="3" y="681.2" width="1.5" height="8.2"/><path d="M10.7 681.2V689.4L4.9 685.3Z"/>
<path d="M24.8 681.2V689.4L18.6 685.3Z"/><rect x="25.8" y="683.6" width="1.6" height="3.4"/>
<path d="M35.4 680V690.6L43.4 685.3Z"/>
<path d="M53.4 681.2V689.4L59.6 685.3Z"/><rect x="50.8" y="683.6" width="1.6" height="3.4"/>
<rect x="73.7" y="681.2" width="1.5" height="8.2"/><path d="M67.4 681.2V689.4L73.2 685.3Z"/>
</g>
<path d="M94.6 694.7H498.9" stroke="#5f6a7b" stroke-width="1" fill="none"/>
<path d="M94.6 691.2V694.6M110.1 691.2V694.6M125.7 691.2V694.6M141.2 691.2V694.6M156.8 691.2V694.6M172.3 691.2V694.6M187.9 691.2V694.6M203.4 691.2V694.6M219.0 691.2V694.6M234.6 691.2V694.6M250.1 691.2V694.6M265.6 691.2V694.6M281.2 691.2V694.6M296.8 691.2V694.6M312.3 691.2V694.6M327.9 691.2V694.6M343.4 691.2V694.6M359.0 691.2V694.6M374.5 691.2V694.6M390.0 691.2V694.6M405.6 691.2V694.6M421.1 691.2V694.6M436.7 691.2V694.6M452.2 691.2V694.6M467.8 691.2V694.6M483.4 691.2V694.6M498.9 691.2V694.6" stroke="#5f6a7b" stroke-width="0.9" fill="none"/>
<g transform="translate(94.6 684.4) scale(0.9) translate(-94.6 -684)">
<rect x="90.2" y="679.4" width="9" height="8.8" fill="none" stroke="#b4b8c0" stroke-width="0.9"/>
<g fill="#2fa9ea"><rect x="89.4" y="678.6" width="1.5" height="1.5"/><rect x="98.5" y="678.6" width="1.5" height="1.5"/><rect x="89.4" y="687.5" width="1.5" height="1.5"/></g>
<path d="M94.8 689.6L100.2 684.2" stroke="#3a4556" stroke-width="3.2"/>
<path d="M95.8 688.6L99.0 685.4" stroke="#f2c64a" stroke-width="1.7"/><path d="M98.8 685.6L100.1 684.3" stroke="#e8553f" stroke-width="1.7"/><path d="M94.8 689.6l0.5 -1.6l1.1 1.1z" fill="#f4f4f4"/>
</g>
<g transform="translate(110.1 684.4) scale(0.9) translate(-110.1 -684)">
<path d="M104.7 680.6L106.9 678.4H113.1V686.2L110.9 688.2H104.7Z" fill="#62bff5"/>
<path d="M104.7 680.6L106.9 678.4H113.1L110.9 680.6Z" fill="#a5dfff"/><path d="M110.9 680.6L113.1 678.4V686.2L110.9 688.2Z" fill="#3d9fe0"/>
<path d="M104.7 688.2H110.9L113.1 686.2V687.8L110.9 689.8H104.7Z" fill="#e4e2de"/>
<path d="M114.9 679.4V687.4" stroke="#e8e8e8" stroke-width="1"/>
</g>
<g transform="translate(125.7 684.4) scale(0.9) translate(-125.7 -684)">
<rect x="121.3" y="679.4" width="9" height="8.8" fill="none" stroke="#b4b8c0" stroke-width="0.9"/>
<g fill="#2fa9ea"><rect x="120.5" y="678.6" width="1.5" height="1.5"/><rect x="129.6" y="678.6" width="1.5" height="1.5"/><rect x="120.5" y="687.5" width="1.5" height="1.5"/></g>
<path d="M125.9 689.6L131.3 684.2" stroke="#3a4556" stroke-width="3.2"/>
<path d="M126.9 688.6L130.1 685.4" stroke="#f2c64a" stroke-width="1.7"/><path d="M129.9 685.6L131.2 684.3" stroke="#e8553f" stroke-width="1.7"/><path d="M125.9 689.6l0.5 -1.6l1.1 1.1z" fill="#f4f4f4"/>
</g>
<g transform="translate(141.2 684.4) scale(0.9) translate(-141.2 -684)">
<path d="M135.8 680.6L138.1 678.4H144.2V686.2L142.1 688.2H135.8Z" fill="#62bff5"/>
<path d="M135.8 680.6L138.1 678.4H144.2L142.1 680.6Z" fill="#a5dfff"/><path d="M142.1 680.6L144.2 678.4V686.2L142.1 688.2Z" fill="#3d9fe0"/>
<path d="M135.8 688.2H142.1L144.2 686.2V687.8L142.1 689.8H135.8Z" fill="#e4e2de"/>
<path d="M146.1 679.4V687.4" stroke="#e8e8e8" stroke-width="1"/>
</g>
<g transform="translate(156.8 684.4) scale(0.9) translate(-156.8 -684)">
<path d="M155.2 680.6L157.2 679H162.0V684.2L160.0 685.8H158.4V687.6L156.4 689.2H151.6V684L153.6 682.4H155.2Z" fill="#62bff5"/>
<path d="M155.2 680.6L157.2 679H162.0L160.0 680.6Z" fill="#a5dfff"/><path d="M160.0 680.6L162.0 679V684.2L160.0 685.8Z" fill="#3d9fe0"/>
</g>
<g transform="translate(172.3 684.4) scale(0.82) translate(-172.3 -684)">
<path d="M166.3 682.4L170.3 678.4H172.9L178.3 683.6V686.6L174.9 689.8H166.3Z" fill="#e4e2de"/>
<path d="M169.9 680.4L172.8 678.4L178.3 683.6L175.3 685.8Z" fill="#62bff5"/><path d="M175.3 685.8L178.3 683.6V686.6L174.9 689.8Z" fill="#bdbab5"/>
</g>
<g transform="translate(187.9 684.4) scale(0.82) translate(-187.9 -684)">
<path d="M181.9 681.4L184.9 678.4H188.7Q193.9 679.4 193.9 684.6V686.6L190.5 689.8H181.9Z" fill="#e4e2de"/>
<path d="M185.5 680.2L187.7 678.4Q193.9 678.8 193.9 684.8L191.1 686.4Q190.9 680.8 185.5 680.2Z" fill="#62bff5"/>
</g>
<g transform="translate(203.4 684.4) scale(0.82) translate(-203.4 -684)">
<g fill="#f2f2f2"><path d="M203.4 678l2.3 2.9h-4.6z"/><path d="M203.4 690l2.3-2.9h-4.6z"/><path d="M197.4 684l2.9-2.3v4.6z"/><path d="M209.4 684l-2.9-2.3v4.6z"/></g><path d="M203.4 680.4V687.6M199.8 684H207.0" stroke="#f2f2f2" stroke-width="1.2"/>
</g>
<g transform="translate(219.0 684.4) scale(0.9) translate(-219.0 -684)">
<rect x="214.6" y="679.4" width="9" height="8.8" fill="none" stroke="#b4b8c0" stroke-width="0.9"/>
<g fill="#2fa9ea"><rect x="213.8" y="678.6" width="1.5" height="1.5"/><rect x="222.9" y="678.6" width="1.5" height="1.5"/><rect x="213.8" y="687.5" width="1.5" height="1.5"/></g>
<path d="M219.2 689.6L224.6 684.2" stroke="#3a4556" stroke-width="3.2"/>
<path d="M220.2 688.6L223.4 685.4" stroke="#f2c64a" stroke-width="1.7"/><path d="M223.2 685.6L224.5 684.3" stroke="#e8553f" stroke-width="1.7"/><path d="M219.2 689.6l0.5 -1.6l1.1 1.1z" fill="#f4f4f4"/>
</g>
<g transform="translate(234.6 684.4) scale(0.9) translate(-234.6 -684)">
<path d="M229.2 680.6L231.4 678.4H237.6V686.2L235.4 688.2H229.2Z" fill="#62bff5"/>
<path d="M229.2 680.6L231.4 678.4H237.6L235.4 680.6Z" fill="#a5dfff"/><path d="M235.4 680.6L237.6 678.4V686.2L235.4 688.2Z" fill="#3d9fe0"/>
<path d="M229.2 688.2H235.4L237.6 686.2V687.8L235.4 689.8H229.2Z" fill="#e4e2de"/>
<path d="M239.4 679.4V687.4" stroke="#e8e8e8" stroke-width="1"/>
</g>
<g transform="translate(250.1 684.4) scale(0.82) translate(-250.1 -684)">
<path d="M244.1 681.4L247.1 678.4H250.9Q256.1 679.4 256.1 684.6V686.6L252.7 689.8H244.1Z" fill="#e4e2de"/>
<path d="M247.7 680.2L249.9 678.4Q256.1 678.8 256.1 684.8L253.3 686.4Q253.1 680.8 247.7 680.2Z" fill="#62bff5"/>
</g>
<g transform="translate(265.6 684.4) scale(0.9) translate(-265.6 -684)">
<rect x="261.2" y="679.4" width="9" height="8.8" fill="none" stroke="#b4b8c0" stroke-width="0.9"/>
<g fill="#2fa9ea"><rect x="260.4" y="678.6" width="1.5" height="1.5"/><rect x="269.5" y="678.6" width="1.5" height="1.5"/><rect x="260.4" y="687.5" width="1.5" height="1.5"/></g>
<path d="M265.8 689.6L271.2 684.2" stroke="#3a4556" stroke-width="3.2"/>
<path d="M266.8 688.6L270.0 685.4" stroke="#f2c64a" stroke-width="1.7"/><path d="M269.8 685.6L271.1 684.3" stroke="#e8553f" stroke-width="1.7"/><path d="M265.8 689.6l0.5 -1.6l1.1 1.1z" fill="#f4f4f4"/>
</g>
<g transform="translate(281.2 684.4) scale(0.9) translate(-281.2 -684)">
<path d="M275.8 680.6L278.0 678.4H284.2V686.2L282.0 688.2H275.8Z" fill="#62bff5"/>
<path d="M275.8 680.6L278.0 678.4H284.2L282.0 680.6Z" fill="#a5dfff"/><path d="M282.0 680.6L284.2 678.4V686.2L282.0 688.2Z" fill="#3d9fe0"/>
<path d="M275.8 688.2H282.0L284.2 686.2V687.8L282.0 689.8H275.8Z" fill="#e4e2de"/>
<path d="M286.0 679.4V687.4" stroke="#e8e8e8" stroke-width="1"/>
</g>
<g transform="translate(296.8 684.4) scale(0.9) translate(-296.8 -684)">
<rect x="292.4" y="679.4" width="9" height="8.8" fill="none" stroke="#b4b8c0" stroke-width="0.9"/>
<g fill="#2fa9ea"><rect x="291.6" y="678.6" width="1.5" height="1.5"/><rect x="300.6" y="678.6" width="1.5" height="1.5"/><rect x="291.6" y="687.5" width="1.5" height="1.5"/></g>
<path d="M296.9 689.6L302.4 684.2" stroke="#3a4556" stroke-width="3.2"/>
<path d="M297.9 688.6L301.1 685.4" stroke="#f2c64a" stroke-width="1.7"/><path d="M300.9 685.6L302.2 684.3" stroke="#e8553f" stroke-width="1.7"/><path d="M296.9 689.6l0.5 -1.6l1.1 1.1z" fill="#f4f4f4"/>
</g>
<g transform="translate(312.3 684.4) scale(0.9) translate(-312.3 -684)">
<path d="M306.9 680.6L309.1 678.4H315.3V686.2L313.1 688.2H306.9Z" fill="#62bff5"/>
<path d="M306.9 680.6L309.1 678.4H315.3L313.1 680.6Z" fill="#a5dfff"/><path d="M313.1 680.6L315.3 678.4V686.2L313.1 688.2Z" fill="#3d9fe0"/>
<path d="M306.9 688.2H313.1L315.3 686.2V687.8L313.1 689.8H306.9Z" fill="#e4e2de"/>
<path d="M317.1 679.4V687.4" stroke="#e8e8e8" stroke-width="1"/>
</g>
<g transform="translate(327.9 684.4) scale(0.82) translate(-327.9 -684)">
<rect x="323.7" y="679" width="4" height="4.6" rx="0.8" fill="#e4e2de"/><rect x="328.5" y="684.4" width="4" height="4.6" rx="0.8" fill="#e4e2de"/><rect x="325.5" y="685.6" width="1.6" height="1.6" fill="#2fa9ea"/>
</g>
<g transform="translate(343.4 684.4) scale(0.82) translate(-343.4 -684)">
<g fill="#f2f2f2"><path d="M343.4 678l2.3 2.9h-4.6z"/><path d="M343.4 690l2.3-2.9h-4.6z"/><path d="M337.4 684l2.9-2.3v4.6z"/><path d="M349.4 684l-2.9-2.3v4.6z"/></g><path d="M343.4 680.4V687.6M339.8 684H347.0" stroke="#f2f2f2" stroke-width="1.2"/>
</g>
<g transform="translate(359.0 684.4) scale(0.9) translate(-359.0 -684)">
<path d="M357.4 680.6L359.4 679H364.2V684.2L362.2 685.8H360.6V687.6L358.6 689.2H353.8V684L355.8 682.4H357.4Z" fill="#62bff5"/>
<path d="M357.4 680.6L359.4 679H364.2L362.2 680.6Z" fill="#a5dfff"/><path d="M362.2 680.6L364.2 679V684.2L362.2 685.8Z" fill="#3d9fe0"/>
</g>
<g transform="translate(374.5 684.4) scale(0.9) translate(-374.5 -684)">
<rect x="370.1" y="679.4" width="9" height="8.8" fill="none" stroke="#b4b8c0" stroke-width="0.9"/>
<g fill="#2fa9ea"><rect x="369.3" y="678.6" width="1.5" height="1.5"/><rect x="378.4" y="678.6" width="1.5" height="1.5"/><rect x="369.3" y="687.5" width="1.5" height="1.5"/></g>
<path d="M374.7 689.6L380.1 684.2" stroke="#3a4556" stroke-width="3.2"/>
<path d="M375.7 688.6L378.9 685.4" stroke="#f2c64a" stroke-width="1.7"/><path d="M378.7 685.6L380.0 684.3" stroke="#e8553f" stroke-width="1.7"/><path d="M374.7 689.6l0.5 -1.6l1.1 1.1z" fill="#f4f4f4"/>
</g>
<g transform="translate(390.0 684.4) scale(0.82) translate(-390.0 -684)">
<path d="M385.0 680.4Q390.0 677.6 395.0 680.2" stroke="#f4f4f4" stroke-width="1" fill="none"/>
<path d="M384.0 683.4Q390.0 678.4 396.0 682.8V684.4L394.0 688.8Q390.0 685.8 386.2 689L384.0 686.6Z" fill="#62bff5"/>
<path d="M384.0 683.4Q390.0 678.4 396.0 682.8L394.0 685.4Q390.0 682.6 386.2 685.8Z" fill="#a5dfff"/><path d="M394.0 685.4L396.0 682.8V686.4L394.0 688.8Z" fill="#e4e2de"/>
</g>
<g transform="translate(405.6 684.4) scale(0.9) translate(-405.6 -684)">
<rect x="401.2" y="679.4" width="9" height="8.8" fill="none" stroke="#b4b8c0" stroke-width="0.9"/>
<g fill="#2fa9ea"><rect x="400.4" y="678.6" width="1.5" height="1.5"/><rect x="409.5" y="678.6" width="1.5" height="1.5"/><rect x="400.4" y="687.5" width="1.5" height="1.5"/></g>
<path d="M405.8 689.6L411.2 684.2" stroke="#3a4556" stroke-width="3.2"/>
<path d="M406.8 688.6L410.0 685.4" stroke="#f2c64a" stroke-width="1.7"/><path d="M409.8 685.6L411.1 684.3" stroke="#e8553f" stroke-width="1.7"/><path d="M405.8 689.6l0.5 -1.6l1.1 1.1z" fill="#f4f4f4"/>
</g>
<g transform="translate(421.1 684.4) scale(0.82) translate(-421.1 -684)">
<path d="M415.1 681.4L418.5 678.6H422.1L420.1 680.6H424.1L427.1 681.8V685.8L424.1 688.2H419.1V684.8H417.1L415.1 683.8Z" fill="#62bff5"/>
<path d="M415.1 681.4L418.5 678.6H422.1L420.1 680.6L417.5 681.8Z" fill="#a5dfff"/><rect x="419.1" y="684.6" width="5.6" height="5.6" fill="#dedcd7" stroke="#8d8b86" stroke-width="0.4"/>
</g>
<g transform="translate(436.7 684.4) scale(0.82) translate(-436.7 -684)">
<path d="M436.8 678.4L436.5 689.4H430.7Z" fill="#e9e8e5"/><path d="M436.9 678.4L442.7 689.4H436.7Z" fill="#62bff5"/>
</g>
<g transform="translate(452.2 684.4) scale(0.82) translate(-452.2 -684)">
<path d="M445.2 684L448.1 681.2V683H451.6V685H448.1V686.8Z" fill="#bfc0c0"/><circle cx="454.6" cy="684" r="3" fill="#86b3e3"/>
</g>
<g transform="translate(467.8 684.4) scale(0.9) translate(-467.8 -684)">
<path d="M466.2 680.6L468.2 679H473.0V684.2L471.0 685.8H469.4V687.6L467.4 689.2H462.6V684L464.6 682.4H466.2Z" fill="#62bff5"/>
<path d="M466.2 680.6L468.2 679H473.0L471.0 680.6Z" fill="#a5dfff"/><path d="M471.0 680.6L473.0 679V684.2L471.0 685.8Z" fill="#3d9fe0"/>
</g>
<g transform="translate(483.4 684.4) scale(0.82) translate(-483.4 -684)">
<g fill="#f2f2f2"><path d="M483.4 678l2.3 2.9h-4.6z"/><path d="M483.4 690l2.3-2.9h-4.6z"/><path d="M477.4 684l2.9-2.3v4.6z"/><path d="M489.4 684l-2.9-2.3v4.6z"/></g><path d="M483.4 680.4V687.6M479.8 684H487.0" stroke="#f2f2f2" stroke-width="1.2"/>
</g>
<rect x="491.2" y="676.4" width="12.2" height="15" fill="#27a8ea"/>
<rect x="493.6" y="680.0" width="7.6" height="7.8" fill="none" stroke="#d9eefb" stroke-width="0.9" stroke-dasharray="1.6 0.9"/>
<g fill="#eaf6fd"><rect x="492.9" y="679.3000000000001" width="1.4" height="1.4"/><rect x="500.5" y="679.3000000000001" width="1.4" height="1.4"/><rect x="492.9" y="687.1" width="1.4" height="1.4"/></g>
<path d="M498.6 688.8000000000001L501.4 686.0" stroke="#f2c64a" stroke-width="1.6"/><path d="M501.2 686.2L502.4 685.0" stroke="#e8553f" stroke-width="1.6"/>
<path d="M502.6 675.3H510.8L507.6 679.2V695.6H505.9V679.2Z" fill="#d0d3d9"/>
<g transform="translate(1009.6 684.6)" fill="#aab1bd"><circle r="3.6"/><rect x="-1.2" y="-5.2" width="2.4" height="10.4"/><rect x="-1.2" y="-5.2" width="2.4" height="10.4" transform="rotate(60)"/><rect x="-1.2" y="-5.2" width="2.4" height="10.4" transform="rotate(120)"/><circle r="1.7" fill="#3a4556"/></g>
<ellipse cx="439.1" cy="655.2" rx="4.6" ry="2" fill="none" stroke="#e3e6ea" stroke-width="0.9"/><path d="M439.1 649.4V661.2" stroke="#39aeea" stroke-width="1.1"/><path d="M442.6 657.4l2 -0.4l-0.8 -1.8z" fill="#e3e6ea"/>
<path d="M448.3 654.3H452.1L450.2 656.5999999999999Z" fill="#b4bbc6"/>
<rect x="457.2" y="652" width="9.6" height="7.8" rx="0.8" fill="#e3e6ea"/><path d="M458.8 652L459.8 650.2H462.4L463.2 652" fill="none" stroke="#e3e6ea" stroke-width="0.9"/><path d="M464.2 651.8V650.6" stroke="#e3e6ea" stroke-width="0.8"/><rect x="459" y="654.4" width="6" height="3.2" fill="#2ea4e6"/>
<g stroke="#e3e6ea" stroke-width="1.25" stroke-linecap="round" fill="none"><path d="M477.4 657L475.7 651.6M478.3 656.6L477.7 650.2M479.4 656.6L479.9 650.2M480.4 657L482 651.8M476.6 658.2L474.3 655.4"/></g><ellipse cx="478.8" cy="658.2" rx="2.7" ry="2.7" fill="#e3e6ea"/>
<circle cx="493.8" cy="654.6" r="2.9" fill="none" stroke="#e3e6ea" stroke-width="1"/><path d="M496 656.8L498.6 659.6" stroke="#d9a867" stroke-width="1.5"/><path d="M499 650v3.2M497.6 651.4l1.4-1.6l1.4 1.6M497.6 653.6h2.8" stroke="#e3e6ea" stroke-width="0.7" fill="none"/>
<rect x="507" y="650.4" width="9" height="9" fill="none" stroke="#e3e6ea" stroke-width="0.8" stroke-dasharray="1.5 1"/><circle cx="511.3" cy="654.6" r="3.2" fill="#55606f" stroke="#e3e6ea" stroke-width="0.9"/><path d="M513.8 657.2L516 659.6" stroke="#d9a867" stroke-width="1.3"/>
<path d="M520.5 654.3H524.3L522.4 656.5999999999999Z" fill="#b4bbc6"/>
<rect x="528.6" y="651" width="10" height="7" fill="#8d949f" stroke="#e3e6ea" stroke-width="0.9"/><path d="M531.4 660.4H535.8M533.6 658V660.4" stroke="#e3e6ea" stroke-width="0.9"/>
<path d="M540.7 654.3H544.5L542.6 656.5999999999999Z" fill="#b4bbc6"/>
<path d="M548.4 650.2H557.4V659H548.4ZM551.4 650.2V659M554.4 650.2V659M548.4 653.1H557.4M548.4 656.1H557.4" fill="none" stroke="#e3e6ea" stroke-width="0.8"/>
<path d="M560.7 654.3H564.5L562.6 656.5999999999999Z" fill="#b4bbc6"/>
<g fill="#e3e6ea"><rect x="568.2" y="650.8" width="4.4" height="2.4"/><rect x="573.4" y="650.8" width="4.4" height="2.4"/><rect x="568.2" y="654" width="4.4" height="2.4"/><rect x="573.4" y="654" width="4.4" height="2.4"/><rect x="568.2" y="657.2" width="4.4" height="2.4"/><rect x="573.4" y="657.2" width="4.4" height="2.4"/></g>
<path d="M580.7 654.3H584.5L582.6 656.5999999999999Z" fill="#b4bbc6"/>
</svg>
<div class="abs" style="left:1023px;top:0;width:1px;height:17.3px;background:#62575b"></div><div class="abs" style="left:1023px;top:17.3px;width:1px;height:75px;background:#556074"></div><div class="abs" style="left:1023px;top:667.5px;width:1px;height:31.5px;background:#556074"></div>
<svg class="abs" style="left:1016px;top:0" width="8" height="8" viewBox="0 0 8 8"><path d="M2.5 0H8V5.5A5.5 5.5 0 0 0 2.5 0Z" fill="#20181b"/></svg><svg class="abs" style="left:1020px;top:695px" width="4" height="4" viewBox="0 0 4 4"><path d="M4 0.5V4H0.5A3.5 3.5 0 0 0 4 0.5Z" fill="#d8d8d8"/></svg>
</body></html>
